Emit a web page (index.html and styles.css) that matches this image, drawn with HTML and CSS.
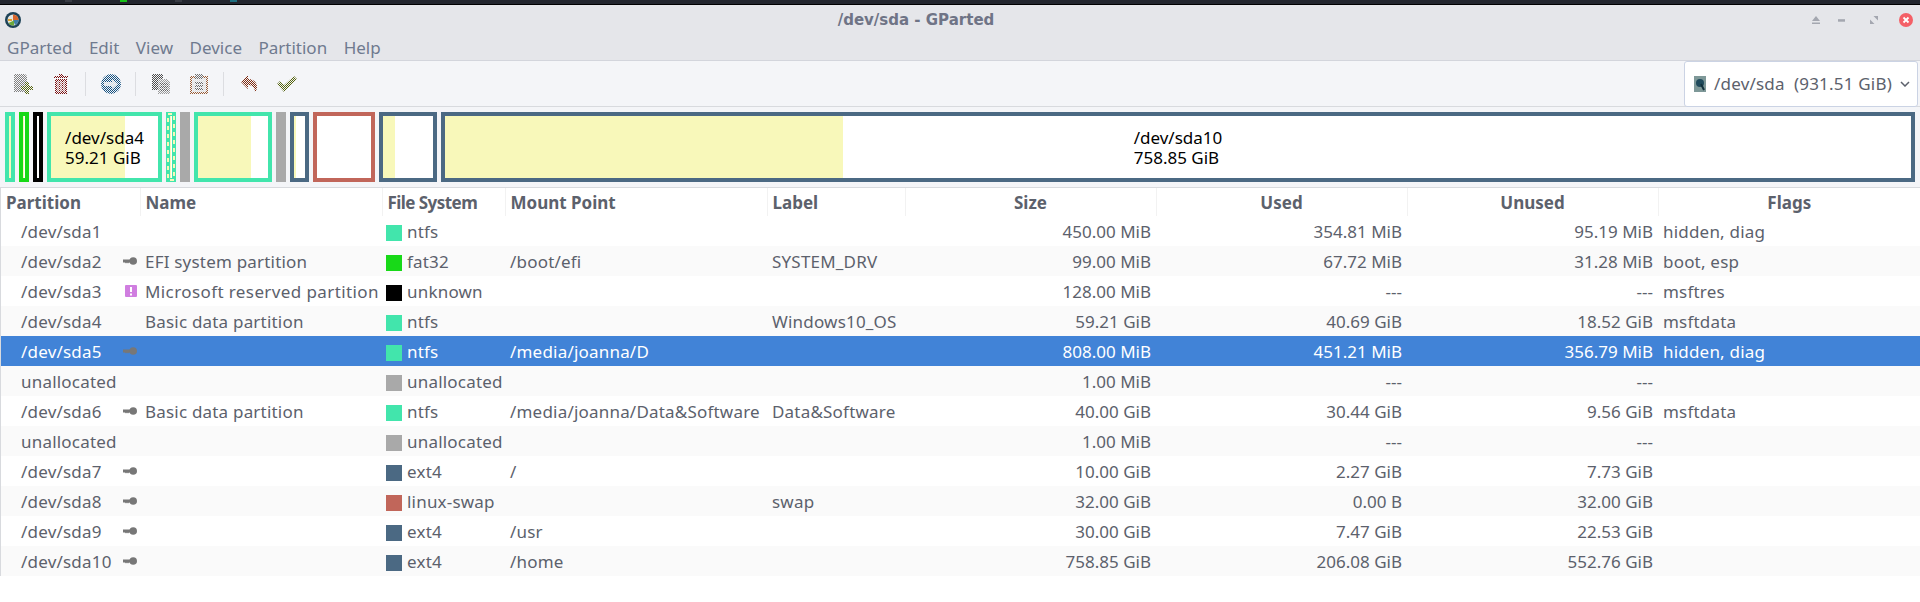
FILE: index.html
```html
<!DOCTYPE html>
<html lang="en">
<head>
    <meta charset="UTF-8">
    <title>/dev/sda - GParted</title>
    <link rel="stylesheet" href="styles.css">
</head>
<body>
    <svg class="defs" width="0" height="0">
        <symbol id="key" viewBox="0 0 14 8">
            <path d="M0 2.500h8v3H6L5 6.500 4 5.500 3 6.500 2 5.500H0z" fill="#777"/>
            <circle cx="10.200" cy="4" r="3.800" fill="#777"/>
        </symbol>
    </svg>

    <div class="panel">
        <i></i><i class="g"></i><i></i><i class="t"></i>
    </div>

    <header class="titlebar">
        <svg class="logo" width="16" height="16" viewBox="0 0 16 16">
            <circle cx="8" cy="8" r="8" fill="#1d4257"/>
            <circle cx="8" cy="8" r="5.500" fill="#e6e6e0"/>
            <path d="M8 8V2.500A5.500 5.500 0 0 1 13.500 8z" fill="#d8662c"/>
            <path d="M8 8h5.500A5.500 5.500 0 0 1 10 13z" fill="#3f7fa8"/>
            <path d="M9 8.500v5A5.500 5.500 0 0 1 3.500 11z" fill="#6aa83c"/>
            <path d="M3 7h4v2H3z" fill="#e0a030"/>
        </svg>
        <div class="title">/dev/sda - GParted</div>
        <div class="wm">
            <svg width="10" height="9" viewBox="0 0 10 9"><path d="M5 0l4 5H1zM1 6.500h8V8H1z" fill="#a4a7b0"/></svg>
            <svg class="wm-min" width="7" height="3" viewBox="0 0 7 3"><rect width="7" height="2.500" y=".2" fill="#a4a7b0"/></svg>
            <svg width="8" height="8" viewBox="0 0 8 8"><path d="M0 3.500V8h4.500zM8 4.500V0H3.500z" fill="#a4a7b0"/></svg>
            <svg width="14" height="14" viewBox="0 0 14 14"><circle cx="7" cy="7" r="7" fill="#f46067"/><path d="M4.500 4.500l5 5M9.500 4.500l-5 5" stroke="#fff" stroke-width="1.800"/></svg>
        </div>
    </header>

    <nav class="menubar">
        <span>GParted</span><span>Edit</span><span>View</span><span>Device</span><span>Partition</span><span>Help</span>
    </nav>

    <div class="toolbar">
        <span class="tool"><svg class="dither" width="19" height="20" viewBox="0 0 19 20">
            <path d="M0 0h11l2 2v16H0z" fill="#808080"/>
            <path d="M11 8h4v4h4v4h-4v4h-4v-4H7v-4h4z" fill="#56640f"/>
        </svg></span>
        <span class="tool"><svg class="dither" width="14" height="20" viewBox="0 0 14 20">
            <path d="M5 0h4v2h5v2H0V2h5zM1 5h12v15H1z" fill="#7c1010"/>
            <path d="M4 7v11M7 7v11M10 7v11" stroke="#f4f5f8" stroke-width="1"/>
        </svg></span>
        <b class="sep"></b>
        <span class="tool"><svg class="dither" width="20" height="20" viewBox="0 0 20 20">
            <circle cx="10" cy="10" r="10" fill="#14507f"/>
            <path d="M3 8h8V5l6 5-6 5v-3H3z" fill="#cfd8e0"/>
        </svg></span>
        <b class="sep"></b>
        <span class="tool"><svg class="dither" width="18" height="20" viewBox="0 0 18 20">
            <path d="M0 0h11v16H0z" fill="#4c4c4c"/>
            <path d="M6 5h9l3 3v12H6z" fill="#999"/>
            <path d="M8 10h8M8 13h8M8 16h8" stroke="#333" stroke-width="1"/>
        </svg></span>
        <span class="tool"><svg class="dither" width="18" height="20" viewBox="0 0 18 20">
            <path d="M0 2h18v18H0z" fill="#9a5c34"/>
            <path d="M2 4h14v14H2z" fill="#ddd"/>
            <path d="M5 0h8v5H5z" fill="#707070"/>
            <path d="M5 9h8M5 12h8M5 15h8" stroke="#444" stroke-width="1.500"/>
        </svg></span>
        <b class="sep"></b>
        <span class="tool"><svg class="dither" width="16" height="17" viewBox="0 0 16 17">
            <path d="M7 0v4c5 0 9 3 9 8 0 2-1 4-2 5 0-4-3-7-7-7v4L0 7z" fill="#7f2a10"/>
        </svg></span>
        <span class="tool"><svg class="dither" width="20" height="16" viewBox="0 0 20 16">
            <path d="M0 8l3-3 4 4L17 0l3 3L7 16z" fill="#56640f"/>
        </svg></span>
        <div class="device">
            <svg width="12" height="16" viewBox="0 0 12 16">
                <rect width="12" height="16" fill="#7e9898"/>
                <circle cx="6" cy="7" r="4" fill="#1f4a5c"/>
                <path d="M7 8l3 6" stroke="#12303c" stroke-width="2"/>
            </svg>
            <span class="device-name">/dev/sda&nbsp; (931.51 GiB)</span>
            <svg class="chev" width="10" height="6" viewBox="0 0 10 6"><path d="M1 1l4 4 4-4" fill="none" stroke="#5c616c" stroke-width="1.500"/></svg>
        </div>
    </div>

    <div class="diskmap">
        <div class="seg ntfs" style="width:10px"><div class="used" style="width:2px"></div></div>
        <div class="seg fat" style="width:10px"><div class="used" style="width:1px"></div></div>
        <div class="seg unk" style="width:10px"></div>
        <div class="seg ntfs" style="width:115px"><div class="used" style="width:74px"></div><div class="seg-text">/dev/sda4<br>59.21 GiB</div></div>
        <div class="seg ntfs selected" style="width:10px">
            <svg width="10" height="70" viewBox="0 0 10 70">
                <rect x="2" y="2" width="6" height="66" fill="none" stroke="#f8f8ba" stroke-width="2" stroke-dasharray="4 4"/>
                <path d="M4 4h1v62H4z" fill="#f8f8ba"/>
                <path d="M5 4h1v62H5z" fill="#fff"/>
            </svg>
        </div>
        <div class="seg gap" style="width:10px"></div>
        <div class="seg ntfs" style="width:78px"><div class="used" style="width:53px"></div></div>
        <div class="seg gap" style="width:10px"></div>
        <div class="seg ext" style="width:19px"><div class="used" style="width:2px"></div></div>
        <div class="seg swap" style="width:62px"></div>
        <div class="seg ext" style="width:58px"><div class="used" style="width:12px"></div></div>
        <div class="seg ext" style="width:1474px"><div class="used" style="width:398px"></div><div class="seg-text">/dev/sda10<br>758.85 GiB</div></div>
    </div>

    <table class="parts">
        <colgroup>
            <col class="c-part"><col class="c-name"><col class="c-fs"><col class="c-mount"><col class="c-label"><col class="c-num"><col class="c-num"><col class="c-num"><col>
        </colgroup>
        <thead>
            <tr>
                <th class="left">Partition</th><th class="left">Name</th><th class="left tight">File System</th><th class="left">Mount Point</th><th class="left">Label</th><th>Size</th><th>Used</th><th>Unused</th><th>Flags</th>
            </tr>
        </thead>
        <tbody>
            <tr><td class="path">/dev/sda1</td><td></td><td><b class="sw ntfs"></b>ntfs</td><td></td><td></td><td class="num">450.00 MiB</td><td class="num">354.81 MiB</td><td class="num">95.19 MiB</td><td>hidden, diag</td></tr>
            <tr><td class="path">/dev/sda2<svg class="key"><use href="#key"/></svg></td><td>EFI system partition</td><td><b class="sw fat"></b>fat32</td><td>/boot/efi</td><td>SYSTEM_DRV</td><td class="num">99.00 MiB</td><td class="num">67.72 MiB</td><td class="num">31.28 MiB</td><td>boot, esp</td></tr>
            <tr><td class="path">/dev/sda3<svg class="warn" width="12" height="12" viewBox="0 0 12 12"><rect width="12" height="12" rx="1" fill="#d07ee0"/><path d="M5 2h2v5H5zM5 8.500h2v2H5z" fill="#fff"/></svg></td><td class="wide">Microsoft reserved partition</td><td><b class="sw unk"></b>unknown</td><td></td><td></td><td class="num">128.00 MiB</td><td class="num">---</td><td class="num">---</td><td>msftres</td></tr>
            <tr><td class="path">/dev/sda4</td><td>Basic data partition</td><td><b class="sw ntfs"></b>ntfs</td><td></td><td>Windows10_OS</td><td class="num">59.21 GiB</td><td class="num">40.69 GiB</td><td class="num">18.52 GiB</td><td>msftdata</td></tr>
            <tr class="on"><td class="path">/dev/sda5<svg class="key"><use href="#key"/></svg></td><td></td><td><b class="sw ntfs"></b>ntfs</td><td>/media/joanna/D</td><td></td><td class="num">808.00 MiB</td><td class="num">451.21 MiB</td><td class="num">356.79 MiB</td><td>hidden, diag</td></tr>
            <tr><td class="path">unallocated</td><td></td><td><b class="sw gap"></b>unallocated</td><td></td><td></td><td class="num">1.00 MiB</td><td class="num">---</td><td class="num">---</td><td></td></tr>
            <tr><td class="path">/dev/sda6<svg class="key"><use href="#key"/></svg></td><td>Basic data partition</td><td><b class="sw ntfs"></b>ntfs</td><td>/media/joanna/Data&amp;Software</td><td>Data&amp;Software</td><td class="num">40.00 GiB</td><td class="num">30.44 GiB</td><td class="num">9.56 GiB</td><td>msftdata</td></tr>
            <tr><td class="path">unallocated</td><td></td><td><b class="sw gap"></b>unallocated</td><td></td><td></td><td class="num">1.00 MiB</td><td class="num">---</td><td class="num">---</td><td></td></tr>
            <tr><td class="path">/dev/sda7<svg class="key"><use href="#key"/></svg></td><td></td><td><b class="sw ext"></b>ext4</td><td>/</td><td></td><td class="num">10.00 GiB</td><td class="num">2.27 GiB</td><td class="num">7.73 GiB</td><td></td></tr>
            <tr><td class="path">/dev/sda8<svg class="key"><use href="#key"/></svg></td><td></td><td><b class="sw swap"></b>linux-swap</td><td></td><td>swap</td><td class="num">32.00 GiB</td><td class="num">0.00 B</td><td class="num">32.00 GiB</td><td></td></tr>
            <tr><td class="path">/dev/sda9<svg class="key"><use href="#key"/></svg></td><td></td><td><b class="sw ext"></b>ext4</td><td>/usr</td><td></td><td class="num">30.00 GiB</td><td class="num">7.47 GiB</td><td class="num">22.53 GiB</td><td></td></tr>
            <tr><td class="path">/dev/sda10<svg class="key"><use href="#key"/></svg></td><td></td><td><b class="sw ext"></b>ext4</td><td>/home</td><td></td><td class="num">758.85 GiB</td><td class="num">206.08 GiB</td><td class="num">552.76 GiB</td><td></td></tr>
        </tbody>
    </table>
</body>
</html>
```
FILE: styles.css
```css
* {
    box-sizing: border-box;
}
html, body {
    margin: 0;
    height: 602px;
    overflow: hidden;
}
body {
    display: flex;
    flex-direction: column;
    font-family: "Noto Sans", sans-serif;
    font-size: 17px;
    color: #5c616c;
    background: #fff;
}
.defs {
    position: absolute;
}
.panel {
    display: flex;
    flex: none;
    gap: 48px;
    height: 5px;
    padding-left: 65px;
    background: #23262e;
    border-bottom: 1px solid #000;
}
.panel i {
    width: 7px;
    height: 2px;
    background: #3a3d45;
}
.panel i.g {
    background: #18c018;
}
.panel i.t {
    background: #1f6f80;
}
.titlebar {
    display: flex;
    align-items: center;
    flex: none;
    height: 30px;
    padding-left: 5px;
    background: #e5e6ea;
}
.logo {
    flex: none;
}
.title {
    flex: 1;
    text-align: center;
    font-family: "DejaVu Sans", sans-serif;
    font-weight: bold;
    font-size: 15px;
    color: #6f7486;
}
.wm {
    display: flex;
    align-items: center;
    justify-content: space-between;
    flex: none;
    width: 109px;
    padding: 0 7px 0 0;
}
.wm-min {
    margin-left: -4px;
    margin-right: 4px;
}
.menubar {
    display: flex;
    flex: none;
    height: 26px;
    padding-left: 7px;
    gap: 16.5px;
    font-size: 17px;
    line-height: 25px;
    color: #6f7a8f;
    background: #e5e6ea;
    border-bottom: 1px solid #d3d5dc;
}
.toolbar {
    display: flex;
    align-items: center;
    flex: none;
    height: 46px;
    padding-left: 4px;
    background: #f4f5f8;
    border-bottom: 1px solid #d8dade;
}
.tool {
    display: flex;
    justify-content: center;
    flex: none;
    width: 38px;
}
.dither {
    mask: repeating-conic-gradient(#000 0 25%, transparent 0 50%) 0 0 / 2px 2px;
}
.sep {
    flex: none;
    width: 1px;
    height: 24px;
    margin: 0 6px 0 5px;
    background: #dcdde1;
}
.device {
    display: flex;
    align-items: center;
    gap: 8px;
    width: 234px;
    height: 46px;
    margin-left: auto;
    margin-right: 2px;
    padding: 0 8px 0 9px;
    font-size: 17px;
    background: #fff;
    border: 1px solid #cbd3e4;
    border-radius: 3px;
}
.device svg {
    flex: none;
}
.device-name {
    white-space: nowrap;
    letter-spacing: .2px;
}
.chev {
    margin-left: auto;
}
.diskmap {
    display: flex;
    gap: 4px;
    flex: none;
    height: 81px;
    padding: 5px 5px 5px;
    background: #f4f5f8;
    border-bottom: 1px solid #d8dade;
}
.seg {
    position: relative;
    display: flex;
    align-items: center;
    justify-content: center;
    flex: none;
    border: 4px solid #999;
    background: #fff;
}
.seg.ntfs { border-color: #42e5ac; }
.seg.fat { border-color: #18d918; }
.seg.unk { border-color: #000; }
.seg.ext { border-color: #4b6983; }
.seg.swap { border-color: #c1665a; }
.seg.gap {
    border-color: #a9a9a9;
    background: #a9a9a9;
}
.seg.selected {
    border: 0;
    background: #42e5ac;
}
.used {
    position: absolute;
    left: 0;
    top: 0;
    bottom: 0;
    background: #f8f8ba;
}
.seg-text {
    position: relative;
    padding-top: 2px;
    font-size: 17px;
    line-height: 20px;
    color: #000;
}
.parts {
    width: 1919px;
    margin-left: 1px;
    flex: none;
    border-collapse: collapse;
    table-layout: fixed;
    box-shadow: -1px 0 0 #d8dade;
}
.c-part { width: 139px; }
.c-name { width: 242px; }
.c-fs { width: 123px; }
.c-mount { width: 262px; }
.c-label { width: 138px; }
.c-num { width: 251px; }
th {
    height: 28px;
    padding: 0 5px;
    font-size: 17px;
    font-weight: bold;
    text-align: center;
    border-left: 1px solid #f2f2f2;
}
th:first-child {
    border-left: 0;
}
th.left {
    text-align: left;
}
th.tight {
    letter-spacing: -.55px;
}
td {
    height: 30px;
    padding: 0 5px;
    white-space: nowrap;
    overflow: hidden;
    letter-spacing: .2px;
}
td.wide {
    letter-spacing: .4px;
}
td.num {
    letter-spacing: 0;
    text-align: right;
}
tbody tr:nth-child(even) {
    background: #fafafa;
}
tbody tr.on {
    background: #4183d7;
    color: #fff;
}
.path {
    position: relative;
    padding-left: 20px;
}
.key {
    position: absolute;
    left: 122px;
    top: 11px;
    width: 14px;
    height: 8px;
}
.warn {
    position: absolute;
    left: 124px;
    top: 9px;
}
.sw {
    display: inline-block;
    width: 16px;
    height: 16px;
    margin: 0 5px 0 -1px;
    vertical-align: -3px;
}
.sw.ntfs { background: #42e5ac; }
.sw.fat { background: #18d918; }
.sw.unk { background: #000; }
.sw.ext { background: #4b6983; }
.sw.swap { background: #c1665a; }
.sw.gap { background: #a9a9a9; }
```
